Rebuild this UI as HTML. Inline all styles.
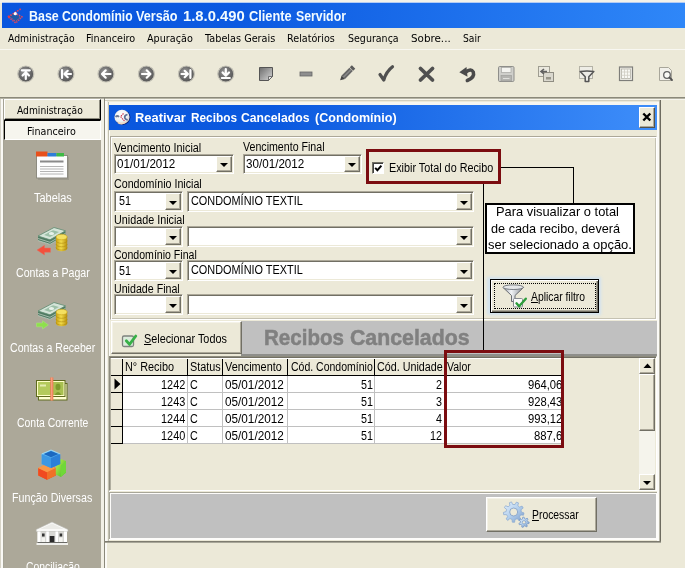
<!DOCTYPE html><html><head><meta charset="utf-8"><title>Base Condomínio</title><style>html,body{margin:0;padding:0}
body{width:685px;height:568px;overflow:hidden;background:#ECE9D8;position:relative;font-family:"Liberation Sans",sans-serif}
.a{position:absolute;box-sizing:border-box}
.t{position:absolute;white-space:nowrap;transform-origin:0 0}
.t u{text-decoration:underline;text-underline-offset:1px}
.btn{position:absolute;box-sizing:border-box;background:#ECE9D8;border:1px solid;border-color:#fff #716F64 #716F64 #fff;box-shadow:inset -1px -1px 0 #ACA899,inset 1px 1px 0 #F4F2E8}
.edit{position:absolute;box-sizing:border-box;background:#fff;border:1px solid;border-color:#ACA899 #fff #fff #ACA899;box-shadow:inset 1px 1px 0 #716F64,inset -1px -1px 0 #ECE9D8}
.dd{position:absolute;box-sizing:border-box;background:#ECE9D8;border:1px solid;border-color:#fff #716F64 #716F64 #fff;box-shadow:inset -1px -1px 0 #ACA899}
.dd:after{content:"";position:absolute;left:50%;top:50%;margin:-1px 0 0 -4px;border:4px solid transparent;border-top:4px solid #000;border-bottom:0}
.gl{position:absolute;background:#C0C0C0}
.bl{position:absolute;background:#000}
</style></head><body><!-- top frame -->
<div class="a" style="left:0;top:0;width:685px;height:3px;background:#F3F2EA"></div>
<div class="a" style="left:2px;top:2px;width:683px;height:26px;background:linear-gradient(to right,#0A56DE 0,#0C5AE1 35%,#2F87F8 100%)"></div><div class="a" style="left:2px;top:2px;width:683px;height:1px;background:#B4CCF4"></div>
<!-- app icon -->
<svg class="a" style="left:6px;top:5px" width="20" height="20" viewBox="6 5 20 20"><path d="M8.500 17l6-4.500 7.500 4.500-6.200 6z" fill="#1C5AA8"/><path d="M8 17L21.500 8.500" stroke="#E04058" stroke-width="1.700" stroke-dasharray="1.600 1.100"/><path d="M8.500 17.200l7.300 5.800 6.200-6-7.500-4.300" fill="none" stroke="#D8486C" stroke-width="1.500" stroke-dasharray="1.500 1"/><path d="M10.500 17.500l5.300 3.800 4-3.800" fill="none" stroke="#C05080" stroke-width="1" stroke-dasharray="1.200 1"/><circle cx="15.300" cy="13.700" r="1.600" fill="#fff"/><circle cx="9" cy="16.800" r="1.200" fill="#E03848"/></svg>
<!-- menu/toolbar separators -->
<div class="a" style="left:0;top:49px;width:685px;height:1px;background:#F8F7F1"></div>
<div class="a" style="left:0;top:97px;width:685px;height:1px;background:#8B897B"></div>
<div class="a" style="left:0;top:98px;width:685px;height:1px;background:#B5B3A4"></div>
<div class="a" style="left:0;top:99px;width:685px;height:1px;background:#F6F5EE"></div>
<!-- toolbar icons -->
<svg class="a" style="left:0;top:52px" width="685" height="44" viewBox="0 52 685 44">
<defs><radialGradient id="rg" cx="0.42" cy="0.38" r="0.68"><stop offset="0" stop-color="#9C9C9C"/><stop offset="0.55" stop-color="#6C6C6C"/><stop offset="1" stop-color="#505050"/></radialGradient>
<linearGradient id="ng" x1="0" y1="0" x2="1" y2="1"><stop offset="0" stop-color="#6c6c6c"/><stop offset="1" stop-color="#d8d8d8"/></linearGradient></defs>
<g stroke="#fff" stroke-width="2.200" fill="none" stroke-linecap="round" stroke-linejoin="round">
<circle cx="25.800" cy="74" r="8" fill="url(#rg)" stroke="#C4C2B6" stroke-width="1.200"/><path d="M21.800 70.300h8M25.800 79v-5.500M22.600 75.500l3.200-3.200 3.200 3.200"/>
<circle cx="66" cy="74" r="8" fill="url(#rg)" stroke="#C4C2B6" stroke-width="1.200"/><path d="M62 70v8M71 74h-5.500M67.700 70.800l-3.200 3.200 3.200 3.200"/>
<circle cx="106" cy="74" r="8" fill="url(#rg)" stroke="#C4C2B6" stroke-width="1.200"/><path d="M110.500 74h-7.500M105.700 70.300l-3.700 3.700 3.700 3.700"/>
<circle cx="146.400" cy="74" r="8" fill="url(#rg)" stroke="#C4C2B6" stroke-width="1.200"/><path d="M142 74h7.500M146.700 70.300l3.700 3.700-3.700 3.700"/>
<circle cx="186.400" cy="74" r="8" fill="url(#rg)" stroke="#C4C2B6" stroke-width="1.200"/><path d="M190.400 70v8M181.500 74h5.500M184.700 70.800l3.200 3.200-3.200 3.200"/>
<circle cx="225.800" cy="74" r="8" fill="url(#rg)" stroke="#C4C2B6" stroke-width="1.200"/><path d="M221.800 78h8M225.800 69v5.500M222.600 72.500l3.200 3.200 3.200-3.200"/>
</g>
<!-- note -->
<path d="M259.500 67.500h13v9l-4 4h-9z" fill="url(#ng)" stroke="#555" stroke-width="1"/><path d="M272.500 76.500h-4v4z" fill="#E8E8E8" stroke="#555" stroke-width="0.800"/>
<!-- minus -->
<rect x="300" y="72" width="12" height="4" fill="#8E8E8E" stroke="#666" stroke-width="0.800"/>
<!-- pencil -->
<g transform="translate(346.500 74) rotate(45)"><rect x="-2.400" y="-10" width="4.800" height="3" fill="#5a5a5a"/><rect x="-2.400" y="-6.500" width="4.800" height="11" fill="#666"/><rect x="-0.600" y="-6.500" width="1.300" height="11" fill="#8a8a8a"/><path d="M-2.400 4.500h4.800l-2.400 4.500z" fill="#444"/></g>
<!-- check -->
<path d="M380 74.500l3.800 5.500q2.500-8.500 8.700-13.200" fill="none" stroke="#505050" stroke-width="3.200" stroke-linecap="round" stroke-linejoin="round"/>
<!-- X -->
<path d="M420.500 68.500l12 11.500M432.500 68.500l-12 11.500" stroke="#505050" stroke-width="3.800" stroke-linecap="round"/>
<!-- undo -->
<path d="M465.500 72.300q5.500-4.300 7.800-.3q1.700 5.500-6 8.500" fill="none" stroke="#4a4a4a" stroke-width="3.500" stroke-linecap="round"/><path d="M459.300 72.300l7.200-5.300 1 9.800z" fill="#4a4a4a"/>
<!-- floppy (disabled) -->
<rect x="498.500" y="66.500" width="15.500" height="15" rx="1.200" fill="#CFCFCB" stroke="#8E8E8A"/><rect x="501.500" y="67.500" width="9.500" height="5" fill="#F4F4F0" stroke="#A6A6A2" stroke-width="0.700"/><rect x="501" y="75.500" width="10.500" height="5.500" fill="#B4B4B0" stroke="#9a9a96" stroke-width="0.600"/><path d="M503 78.500h6.500" stroke="#E0E0DC" stroke-width="1"/>
<!-- export -->
<rect x="538.500" y="66.500" width="11" height="10" fill="#EAE8DE" stroke="#9F9D91"/><rect x="543.500" y="72.500" width="10" height="9" fill="#DAD8CE" stroke="#8F8D82"/><path d="M547 71.500h-5M544 69l-3 2.500 3 2.500" fill="none" stroke="#606060" stroke-width="1.600"/><rect x="546" y="77" width="5" height="2.500" fill="#98968a"/>
<!-- filter -->
<rect x="579.500" y="66.500" width="13" height="12" fill="#EEEDE6" stroke="#B4B2A6"/><path d="M580.200 71.500q6.800-1.200 13.600 0l-5 5.300v4.700h-3.600v-4.700z" fill="#ECEBE6" stroke="#555" stroke-width="1.500" stroke-linejoin="round"/>
<!-- grid -->
<rect x="619.500" y="67" width="13" height="13.500" fill="#F0EFE8" stroke="#7E7E7A" stroke-width="1.200"/><rect x="621.500" y="69" width="9" height="9.500" fill="#F8F8F4" stroke="#B4B2A8" stroke-width="0.800"/><path d="M624.500 69v9.500M627.500 69v9.500M621.500 72h9M621.500 75.300h9" stroke="#CFCDC3" stroke-width="0.800"/>
<!-- search -->
<path d="M659.500 67.500h9l3 3v10h-12z" fill="#F1F0EA" stroke="#A8A69A"/><circle cx="667" cy="75" r="3.300" fill="#F9F9F5" stroke="#606060" stroke-width="1.300"/><path d="M669.500 77.500l2.500 2.500" stroke="#505050" stroke-width="1.800" stroke-linecap="round"/>
</svg>

<!-- sidebar -->
<div class="a" style="left:0;top:99px;width:1px;height:469px;background:#D6D3C6"></div><div class="a" style="left:1px;top:99px;width:2px;height:469px;background:#FAF9F5"></div><div class="a" style="left:3px;top:99px;width:1px;height:469px;background:#A5A395"></div>
<div class="a" style="left:4px;top:140px;width:97px;height:428px;background:#ACA899"></div>
<div class="a" style="left:4px;top:99px;width:97px;height:21px;background:#ECE9D8;border:1px solid;border-color:#fff #000 #000 #fff;box-shadow:inset -1px -1px 0 #8d8b7e"></div>
<div class="a" style="left:4px;top:120px;width:97px;height:20px;background:#F6F5EE;border:1px solid;border-color:#000 #fff #fff #000"></div>
<!-- splitter lines -->
<div class="a" style="left:101px;top:99px;width:3px;height:469px;background:#F2F0E6"></div>
<div class="a" style="left:104px;top:98px;width:1px;height:470px;background:#8B897B"></div>
<div class="a" style="left:105px;top:99px;width:2px;height:469px;background:#FBFAF6"></div>
<!-- sidebar icons -->
<svg class="a" style="left:3px;top:140px" width="98" height="428" viewBox="3 140 98 428">
<defs>
<linearGradient id="cy" x1="0" y1="0" x2="1" y2="0"><stop offset="0" stop-color="#C9A012"/><stop offset="0.45" stop-color="#F2DC4A"/><stop offset="1" stop-color="#B8900E"/></linearGradient>
<linearGradient id="cb" x1="0" y1="0" x2="1" y2="1"><stop offset="0" stop-color="#7CD4FA"/><stop offset="1" stop-color="#1E78D8"/></linearGradient>
<linearGradient id="co" x1="0" y1="0" x2="1" y2="1"><stop offset="0" stop-color="#F8A040"/><stop offset="1" stop-color="#E83818"/></linearGradient>
<linearGradient id="cg" x1="0" y1="0" x2="1" y2="1"><stop offset="0" stop-color="#C8F050"/><stop offset="1" stop-color="#38B828"/></linearGradient>
</defs>
<!-- tabelas -->
<rect x="38" y="157" width="31" height="23" fill="#8f8d82" opacity="0.55"/>
<rect x="36.500" y="155.500" width="31" height="22.500" fill="#FDFDFD" stroke="#8d8b80"/>
<rect x="36" y="151.500" width="11.500" height="5" fill="#E8501C"/><rect x="47.500" y="153" width="9" height="3.500" fill="#2F7DD8"/><rect x="56.500" y="153" width="7.500" height="3.500" fill="#3DBB45"/>
<rect x="40" y="160.500" width="23.500" height="2" fill="#8a8a8a"/><path d="M40 166.500h23.500M40 169h23.500M40 171.500h23.500M40 174h23.500" stroke="#B4B4B4" stroke-width="1"/>
<!-- contas a pagar -->
<g><path d="M38 240.500v-4l16-8.500 11.500 3.500v4l-15.500 9z" fill="#4F7A62"/><path d="M38 236l16-8.500 11.500 3.300-15.500 9z" fill="#D4E4D8" stroke="#5E8A70" stroke-width="0.800"/><path d="M44 235l9-4.800 6 1.800-9 5z" fill="#9CC0A8"/><ellipse cx="51.500" cy="233.500" rx="2.600" ry="1.500" fill="#E8F2EA"/><path d="M38 238.500l12 3.800 15.500-9M38 240.500l12 3.800 15.500-9" stroke="#C8D8CC" stroke-width="0.700" fill="none"/>
<path d="M56 237v11.500a5.600 2.800 0 0 0 11.200 0v-11.500z" fill="url(#cy)"/><ellipse cx="61.600" cy="237" rx="5.600" ry="2.800" fill="#F4E060" stroke="#C8A018" stroke-width="0.600"/><path d="M56 240.500a5.600 2.800 0 0 0 11.200 0M56 244a5.600 2.800 0 0 0 11.200 0M56 247.300a5.600 2.800 0 0 0 11.200 0" stroke="#B08A10" stroke-width="0.600" fill="none"/></g>
<path d="M50.500 248h-6v-2.800l-7.500 4.800 7.500 5v-2.800h6z" fill="#F4503C" stroke="#E07060" stroke-width="0.500"/>
<!-- contas a receber -->
<g transform="translate(0 75)"><path d="M38 240.500v-4l16-8.500 11.500 3.500v4l-15.500 9z" fill="#4F7A62"/><path d="M38 236l16-8.500 11.500 3.300-15.500 9z" fill="#D4E4D8" stroke="#5E8A70" stroke-width="0.800"/><path d="M44 235l9-4.800 6 1.800-9 5z" fill="#9CC0A8"/><ellipse cx="51.500" cy="233.500" rx="2.600" ry="1.500" fill="#E8F2EA"/><path d="M38 238.500l12 3.800 15.500-9M38 240.500l12 3.800 15.500-9" stroke="#C8D8CC" stroke-width="0.700" fill="none"/>
<path d="M56 237v11.500a5.600 2.800 0 0 0 11.200 0v-11.500z" fill="url(#cy)"/><ellipse cx="61.600" cy="237" rx="5.600" ry="2.800" fill="#F4E060" stroke="#C8A018" stroke-width="0.600"/><path d="M56 240.500a5.600 2.800 0 0 0 11.200 0M56 244a5.600 2.800 0 0 0 11.200 0M56 247.300a5.600 2.800 0 0 0 11.200 0" stroke="#B08A10" stroke-width="0.600" fill="none"/></g>
<path d="M36.500 323h6v-2.300l5.800 4.200-5.800 4.200v-2.300h-6z" fill="#8EE04C" stroke="#A8E878" stroke-width="0.500"/>
<!-- conta corrente -->
<rect x="38.500" y="383.500" width="28.500" height="16.500" fill="#FFFFD0" stroke="#5E6A1E"/>
<rect x="36" y="380" width="29.500" height="17" fill="#5E6A1E"/><rect x="37" y="381" width="27.500" height="15" fill="#FFFFC8"/><rect x="38" y="382" width="25.500" height="13" fill="#A8C050"/><rect x="38" y="382" width="12" height="13" fill="#B4CA5C"/>
<ellipse cx="58" cy="387" rx="2.500" ry="3.200" fill="#7E9A2C"/><path d="M54.500 395q3.500-6 7 0z" fill="#7E9A2C"/><rect x="40" y="384.500" width="6" height="2" fill="#E4ECB0"/>
<rect x="50.300" y="377.500" width="3" height="23" fill="#F07850"/><rect x="51.300" y="377.500" width="1" height="23" fill="#F8B090"/>
<!-- funcao diversas -->
<path d="M38.200 468l8.800-4.200 8.800 4.200v7.500l-8.800 4.200-8.800-4.200z" fill="url(#co)"/><path d="M47 472.200l8.800-4.200v7.500l-8.800 4.200z" fill="#F07028"/><path d="M38.200 468l8.800 4.200v7.500l-8.800-4.200z" fill="#F04A20"/><path d="M38.200 468l8.800-4.200 8.800 4.200-8.800 4.200z" fill="#F89848"/>
<path d="M55.800 463.500l5-4.500 5.200 2v11.500l-5.200 4.500-5-2.500z" fill="url(#cg)"/><path d="M60.800 465.500l5.200-4.500v11.500l-5.200 4.500z" fill="#70D838"/>
<g transform="translate(0 1.500)"><path d="M41.700 452.500l9.300-4 9.200 4v10l-9.200 4-9.300-4z" fill="url(#cb)"/><path d="M41.700 452.500l9.300 4v10l-9.300-4z" fill="#3C98E4"/><path d="M51 456.500l9.200-4v10l-9.200 4z" fill="#2C80D8"/><path d="M43.500 452.600l7.500-3.200 7.400 3.200-7.400 3.200z" fill="#1C68C0"/><path d="M41.700 452.500l9.300-4 9.200 4" fill="none" stroke="#A8E0FC" stroke-width="0.800"/></g>
<!-- conciliacao -->
<path d="M36.200 529.500l15.800-7.500 16 7.500v2h-31.800z" fill="#FAFAF8" stroke="#B8B8B4" stroke-width="0.600"/><path d="M40 529l12-5.500 12 5.500z" fill="#ECECE8"/>
<rect x="37.500" y="531.500" width="29.500" height="11.500" fill="#D8D8D4"/><rect x="36.500" y="543" width="31.500" height="2" fill="#F0F0EC"/><rect x="37.500" y="542" width="29.500" height="1" fill="#6a6a66"/>
<rect x="37.500" y="531.500" width="3" height="10.500" fill="#fff"/><rect x="46.300" y="531.500" width="2.500" height="10.500" fill="#fff"/><rect x="55.500" y="531.500" width="2.500" height="10.500" fill="#fff"/><rect x="64" y="531.500" width="3" height="10.500" fill="#fff"/>
<rect x="49.700" y="536" width="4.700" height="6" fill="#2a2a2a"/><rect x="42" y="533.500" width="2.600" height="3" fill="#333"/><rect x="59.600" y="533.500" width="2.600" height="3" fill="#333"/><rect x="41.500" y="537.500" width="3.500" height="4.500" fill="#F4F4F0"/><rect x="59" y="537.500" width="3.500" height="4.500" fill="#F4F4F0"/>
</svg>

<!-- inner window -->
<div class="a" style="left:105px;top:100px;width:555px;height:1px;background:#D2CFBF"></div>
<div class="a" style="left:107px;top:102px;width:552px;height:3px;background:#F7F6F0"></div>
<div class="a" style="left:107px;top:102px;width:1px;height:439px;background:#F1EFE5"></div><div class="a" style="left:108px;top:102px;width:1px;height:439px;background:#C2C0B0"></div><div class="a" style="left:109px;top:131px;width:1px;height:361px;background:#FBFAF6"></div>
<div class="a" style="left:109px;top:105px;width:548px;height:25px;background:linear-gradient(to right,#0A57DE 0,#0B59DF 30%,#3E8EFA 100%)"></div>
<!-- globe icon -->
<svg class="a" style="left:112px;top:107px" width="20" height="20" viewBox="112 107 20 20"><defs><radialGradient id="gg" cx="0.420" cy="0.350" r="0.750"><stop offset="0" stop-color="#fff"/><stop offset="0.600" stop-color="#EEF0F2"/><stop offset="1" stop-color="#C8C0B8"/></radialGradient></defs><ellipse cx="122.500" cy="117.600" rx="7.800" ry="7.400" fill="#0A1E70"/><ellipse cx="122" cy="117" rx="7.600" ry="7.200" fill="url(#gg)"/><path d="M115.500 116.800q1.800-1.600 3.600 0" fill="none" stroke="#6E7A94" stroke-width="1.800"/><path d="M127.500 114.500q-3 .5-2.800 2.800t3 2.500" fill="none" stroke="#5E6E94" stroke-width="1.700"/><path d="M123.500 113.500l-3 3 2 2.500 2.500 2.500" fill="none" stroke="#C83048" stroke-width="1.100" stroke-dasharray="1.400 0.800"/><path d="M118 122.500q4 2.500 8-.5" fill="none" stroke="#F0D8C0" stroke-width="1.500"/></svg>
<!-- close button -->
<div class="a" style="left:639px;top:107px;width:16px;height:21px;background:#ECE9D8;border:1px solid;border-color:#fff #55534A #55534A #fff;box-shadow:inset -1px -1px 0 #ACA899"></div>
<svg class="a" style="left:641px;top:111px" width="12" height="12" viewBox="0 0 12 12"><path d="M2.300 2.500l7 7M9.300 2.500l-7 7" stroke="#000" stroke-width="2.400"/></svg>
<!-- inner right edge -->
<div class="a" style="left:657px;top:102px;width:2px;height:439px;background:#FBFAF6"></div>
<div class="a" style="left:659px;top:100px;width:1px;height:442px;background:#B8B6A8"></div>
<div class="a" style="left:660px;top:100px;width:1px;height:443px;background:#6E6C60"></div>

<!-- form panel -->
<div class="a" style="left:110px;top:136px;width:547px;height:184px;border:1px solid;border-color:#ACA899 #fff #fff #ACA899;box-shadow:inset 1px 1px 0 #fff,inset -1px -1px 0 #C5C2B2"></div>
<!-- date 1 -->
<div class="edit" style="left:114px;top:154px;width:120px;height:20px"></div><div class="dd" style="left:216px;top:156px;width:16px;height:16px"></div>
<!-- date 2 -->
<div class="edit" style="left:243px;top:154px;width:119px;height:20px"></div><div class="dd" style="left:344px;top:156px;width:16px;height:16px"></div>
<!-- checkbox -->
<div class="a" style="left:372px;top:162px;width:12px;height:12px;background:#fff;border:1px solid;border-color:#716F64 #fff #fff #716F64;box-shadow:inset 1px 1px 0 #404040"></div>
<svg class="a" style="left:374px;top:164px" width="9" height="9" viewBox="0 0 9 9"><path d="M1.200 3.800l2.200 2.400 4-4.600" fill="none" stroke="#000" stroke-width="1.900"/></svg>
<!-- combos -->
<div class="edit" style="left:114px;top:191px;width:69px;height:21px"></div><div class="dd" style="left:165px;top:193px;width:16px;height:17px"></div>
<div class="edit" style="left:187px;top:191px;width:287px;height:21px"></div><div class="dd" style="left:456px;top:193px;width:16px;height:17px"></div>
<div class="edit" style="left:114px;top:226px;width:69px;height:21px"></div><div class="dd" style="left:165px;top:228px;width:16px;height:17px"></div>
<div class="edit" style="left:187px;top:226px;width:287px;height:21px"></div><div class="dd" style="left:456px;top:228px;width:16px;height:17px"></div>
<div class="edit" style="left:114px;top:260px;width:69px;height:21px"></div><div class="dd" style="left:165px;top:262px;width:16px;height:17px"></div>
<div class="edit" style="left:187px;top:260px;width:287px;height:21px"></div><div class="dd" style="left:456px;top:262px;width:16px;height:17px"></div>
<div class="edit" style="left:114px;top:294px;width:69px;height:21px"></div><div class="dd" style="left:165px;top:296px;width:16px;height:17px"></div>
<div class="edit" style="left:187px;top:294px;width:287px;height:21px"></div><div class="dd" style="left:456px;top:296px;width:16px;height:17px"></div>

<!-- Aplicar filtro -->
<div class="a" style="left:487px;top:277px;width:114px;height:38px;background:#D2E2F0;filter:blur(1.500px)"></div>
<div class="a" style="left:489.500px;top:279px;width:109.500px;height:33.800px;background:#ECE9D8;border:1px solid #000;box-shadow:inset 1px 1px 0 #fff,inset -1px -1px 0 #716F64,inset -2px -2px 0 #ACA899"></div>
<div class="a" style="left:493.500px;top:282.500px;width:102px;height:26.500px;border:1px dotted #000"></div>
<svg class="a" style="left:500px;top:282px" width="30" height="30" viewBox="500 282 30 30"><defs><linearGradient id="fg" x1="0" y1="0" x2="1" y2="0"><stop offset="0" stop-color="#9aa0a8"/><stop offset="0.4" stop-color="#F2F4F6"/><stop offset="1" stop-color="#8a9098"/></linearGradient></defs><path d="M503 287.500l8.500 8v6h3.500v-6l8.500-8z" fill="url(#fg)" stroke="#5c6068" stroke-width="0.900" stroke-linejoin="round"/><ellipse cx="513.200" cy="287.200" rx="10.300" ry="2.300" fill="#E4E6E8" stroke="#6c7078" stroke-width="0.900"/><rect x="513.500" y="298.500" width="9" height="8.500" rx="1" fill="#FAFAFA" stroke="#7c8088" stroke-width="0.900"/><path d="M516.500 303.300l2.600 3 6.700-7.600" fill="none" stroke="#2E9E3C" stroke-width="2.400" stroke-linecap="round" stroke-linejoin="round"/></svg>

<!-- select all button + banner -->
<div class="a" style="left:241px;top:321px;width:416px;height:35px;background:#C0C0C0"></div>
<div class="a" style="left:241px;top:354px;width:416px;height:2px;background:#8E8E8A"></div>
<div class="btn" style="left:111px;top:321px;width:131px;height:33px"></div>
<svg class="a" style="left:120px;top:331px" width="20" height="20" viewBox="120 331 20 20"><rect x="122.500" y="336" width="11" height="10.500" rx="1.500" fill="#DCEBDC" stroke="#7E827E" stroke-width="1.300"/><path d="M126.300 340.800l3.200 3.600 6.300-8.400" fill="none" stroke="#38B048" stroke-width="2.800" stroke-linecap="round" stroke-linejoin="round"/></svg>

<!-- grid -->
<div class="a" style="left:109px;top:356px;width:548px;height:135px;border:1px solid;border-color:#8E8C7E #fff #fff #8E8C7E;box-shadow:inset 0 1px 0 #716F64,inset 1px 0 0 #B0AE9F"></div>
<div class="a" style="left:123px;top:376px;width:441px;height:68px;background:#fff"></div>
<!-- grid lines -->
<div class="gl" style="left:123px;top:392px;width:441px;height:1px"></div><div class="gl" style="left:123px;top:409px;width:441px;height:1px"></div><div class="gl" style="left:123px;top:426px;width:441px;height:1px"></div><div class="gl" style="left:123px;top:443px;width:441px;height:1px"></div>
<div class="gl" style="left:187px;top:376px;width:1px;height:68px"></div><div class="gl" style="left:222px;top:376px;width:1px;height:68px"></div><div class="gl" style="left:287px;top:376px;width:1px;height:68px"></div><div class="gl" style="left:374px;top:376px;width:1px;height:68px"></div><div class="gl" style="left:444px;top:376px;width:1px;height:68px"></div><div class="gl" style="left:563px;top:376px;width:1px;height:68px"></div>
<!-- header black lines -->
<div class="bl" style="left:111px;top:375px;width:453px;height:1px"></div>
<div class="bl" style="left:122px;top:358px;width:1px;height:86px"></div><div class="bl" style="left:187px;top:358px;width:1px;height:18px"></div><div class="bl" style="left:222px;top:358px;width:1px;height:18px"></div><div class="bl" style="left:287px;top:358px;width:1px;height:18px"></div><div class="bl" style="left:374px;top:358px;width:1px;height:18px"></div><div class="bl" style="left:444px;top:358px;width:1px;height:18px"></div><div class="bl" style="left:563px;top:358px;width:1px;height:18px"></div>
<div class="bl" style="left:111px;top:392px;width:12px;height:1px"></div><div class="bl" style="left:111px;top:409px;width:12px;height:1px"></div><div class="bl" style="left:111px;top:426px;width:12px;height:1px"></div><div class="bl" style="left:111px;top:443px;width:12px;height:1px"></div>
<!-- header highlight -->
<div class="a" style="left:111px;top:358px;width:452px;height:1px;background:#fff"></div>
<!-- row indicator -->
<svg class="a" style="left:113px;top:377px" width="9" height="14" viewBox="0 0 9 14"><path d="M1.500 1.500v11l6-5.500z" fill="#000"/></svg>
<!-- scrollbar -->
<div class="a" style="left:639px;top:358px;width:16px;height:132px;background:#F5F4EC"></div>
<div class="dd" style="left:639px;top:358px;width:16px;height:16px"></div>
<div class="a" style="left:639px;top:358px;width:16px;height:16px;background:#ECE9D8;border:1px solid;border-color:#fff #716F64 #716F64 #fff;box-shadow:inset -1px -1px 0 #ACA899"></div>
<svg class="a" style="left:643px;top:363px" width="9" height="6" viewBox="0 0 9 6"><path d="M0.500 5h8l-4-4.500z" fill="#000"/></svg>
<div class="a" style="left:639px;top:374px;width:16px;height:57px;background:#ECE9D8;border:1px solid;border-color:#fff #716F64 #716F64 #fff;box-shadow:inset -1px -1px 0 #ACA899"></div>
<div class="dd" style="left:639px;top:474px;width:16px;height:16px"></div>

<!-- bottom panel -->
<div class="a" style="left:109px;top:492px;width:549px;height:48px;background:#FDFCFA"></div>
<div class="a" style="left:109px;top:492px;width:548px;height:1px;background:#A8A698"></div>
<div class="a" style="left:109px;top:492px;width:1px;height:47px;background:#A8A698"></div>
<div class="a" style="left:111px;top:494px;width:545px;height:44px;background:#C0C0C0"></div>
<div class="a" style="left:105px;top:541px;width:556px;height:1px;background:#7E7C70"></div>
<div class="a" style="left:105px;top:542px;width:556px;height:1px;background:#A8A698"></div>
<div class="btn" style="left:486px;top:497px;width:111px;height:35px"></div>
<svg class="a" style="left:500px;top:498px" width="32" height="32" viewBox="500 498 32 32"><defs><linearGradient id="gr" x1="0" y1="0" x2="1" y2="1"><stop offset="0" stop-color="#E8F2FC"/><stop offset="0.5" stop-color="#B4D0EE"/><stop offset="1" stop-color="#7C9CC8"/></linearGradient></defs><path d="M521.3 512.0L524.0 512.9L523.5 515.2L520.7 514.9L519.5 516.9L521.0 519.3L519.2 520.7L517.2 518.8L515.0 519.5L514.6 522.3L512.3 522.2L512.0 519.4L509.9 518.6L507.8 520.4L506.1 518.9L507.7 516.6L506.5 514.6L503.7 514.7L503.4 512.4L506.1 511.6L506.6 509.4L504.4 507.6L505.6 505.7L508.1 506.8L509.9 505.4L509.4 502.7L511.5 501.9L512.7 504.5L515.1 504.5L516.4 502.1L518.5 502.9L517.8 505.6L519.5 507.1L522.1 506.1L523.2 508.1L521.0 509.7Z" fill="url(#gr)" stroke="#88A8D0" stroke-width="0.7" stroke-linejoin="round"/><circle cx="513.7" cy="512" r="4" fill="#ECE9D8" stroke="#7C9CC8" stroke-width="0.8"/><path d="M527.7 521.7L529.2 522.1L529.0 523.6L527.5 523.6L526.7 524.8L527.4 526.2L526.2 527.0L525.2 525.8L523.7 526.0L523.1 527.4L521.7 526.9L522.0 525.4L520.9 524.4L519.4 524.8L518.9 523.4L520.3 522.7L520.5 521.2L519.2 520.3L520.0 519.0L521.4 519.6L522.6 518.9L522.6 517.3L524.1 517.1L524.5 518.6L525.8 519.1L527.1 518.1L528.1 519.1L527.2 520.4Z" fill="url(#gr)" stroke="#6E90C0" stroke-width="0.7" stroke-linejoin="round"/><circle cx="524" cy="522.3" r="1.7" fill="#ECE9D8" stroke="#6E90C0" stroke-width="0.6"/></svg>

<!-- annotations -->
<div class="a" style="left:366px;top:149px;width:135px;height:35px;border:3px solid #7B0C10"></div>
<div class="bl" style="left:501px;top:167px;width:73px;height:1px"></div>
<div class="bl" style="left:573px;top:167px;width:1px;height:37px"></div>
<div class="a" style="left:485px;top:203px;width:150px;height:51px;background:#fff;border:2px solid #000"></div>
<div class="bl" style="left:483px;top:184px;width:1px;height:166px"></div>
<div id="txt"><span class="t" id="t0" style="left:28.76px;top:8.85px;font:700 14px/14px 'Liberation Sans', sans-serif;color:#F2FBFF;transform:scaleX(0.8895);">Base</span><span class="t" id="t1" style="left:61.58px;top:8.85px;font:700 14px/14px 'Liberation Sans', sans-serif;color:#F2FBFF;transform:scaleX(0.8639);">Condomínio</span><span class="t" id="t2" style="left:136.46px;top:8.85px;font:700 14px/14px 'Liberation Sans', sans-serif;color:#F2FBFF;transform:scaleX(0.9031);">Versão</span><span class="t" id="t3" style="left:182.78px;top:8.85px;font:700 14px/14px 'Liberation Sans', sans-serif;color:#F2FBFF;transform:scaleX(1.0573);">1.8.0.490</span><span class="t" id="t4" style="left:248.75px;top:8.85px;font:700 14px/14px 'Liberation Sans', sans-serif;color:#F2FBFF;transform:scaleX(0.9145);">Cliente</span><span class="t" id="t5" style="left:295.97px;top:8.85px;font:700 14px/14px 'Liberation Sans', sans-serif;color:#F2FBFF;transform:scaleX(0.8794);">Servidor</span><span class="t" id="t6" style="left:7.87px;top:32.59px;font:400 11px/11px 'DejaVu Sans', sans-serif;color:#000;transform:scaleX(0.8442);">Administração</span><span class="t" id="t7" style="left:86.26px;top:32.59px;font:400 11px/11px 'DejaVu Sans', sans-serif;color:#000;transform:scaleX(0.8775);">Financeiro</span><span class="t" id="t8" style="left:147.46px;top:32.59px;font:400 11px/11px 'DejaVu Sans', sans-serif;color:#000;transform:scaleX(0.8777);">Apuração</span><span class="t" id="t9" style="left:205.26px;top:32.59px;font:400 11px/11px 'DejaVu Sans', sans-serif;color:#000;transform:scaleX(0.8811);">Tabelas Gerais</span><span class="t" id="t10" style="left:287.26px;top:32.59px;font:400 11px/11px 'DejaVu Sans', sans-serif;color:#000;transform:scaleX(0.8736);">Relatórios</span><span class="t" id="t11" style="left:347.87px;top:32.59px;font:400 11px/11px 'DejaVu Sans', sans-serif;color:#000;transform:scaleX(0.8626);">Segurança</span><span class="t" id="t12" style="left:411.14px;top:32.59px;font:400 11px/11px 'DejaVu Sans', sans-serif;color:#000;transform:scaleX(0.9406);">Sobre...</span><span class="t" id="t13" style="left:462.98px;top:32.59px;font:400 11px/11px 'DejaVu Sans', sans-serif;color:#000;transform:scaleX(0.8373);">Sair</span><span class="t" id="t14" style="left:16.98px;top:105.19px;font:400 11px/11px 'DejaVu Sans', sans-serif;color:#000;transform:scaleX(0.8339);">Administração</span><span class="t" id="t15" style="left:27.46px;top:125.79px;font:400 11px/11px 'DejaVu Sans', sans-serif;color:#000;transform:scaleX(0.8703);">Financeiro</span><span class="t" id="t16" style="left:33.62px;top:192.32px;font:400 12.5px/12.5px 'Liberation Sans', sans-serif;color:#fff;transform:scaleX(0.8764);">Tabelas</span><span class="t" id="t17" style="left:16.13px;top:267.32px;font:400 12.5px/12.5px 'Liberation Sans', sans-serif;color:#fff;transform:scaleX(0.8490);">Contas a Pagar</span><span class="t" id="t18" style="left:9.63px;top:341.82px;font:400 12.5px/12.5px 'Liberation Sans', sans-serif;color:#fff;transform:scaleX(0.8459);">Contas a Receber</span><span class="t" id="t19" style="left:17.03px;top:417.02px;font:400 12.5px/12.5px 'Liberation Sans', sans-serif;color:#fff;transform:scaleX(0.8346);">Conta Corrente</span><span class="t" id="t20" style="left:11.83px;top:492.32px;font:400 12.5px/12.5px 'Liberation Sans', sans-serif;color:#fff;transform:scaleX(0.8556);">Função Diversas</span><span class="t" id="t21" style="left:25.64px;top:561.32px;font:400 12.5px/12.5px 'Liberation Sans', sans-serif;color:#fff;transform:scaleX(0.8314);">Conciliação</span><span class="t" id="t22" style="left:135.35px;top:111.47px;font:700 13.5px/13.5px 'Liberation Sans', sans-serif;color:#fff;transform:scaleX(0.9551);">Reativar</span><span class="t" id="t23" style="left:190.79px;top:111.47px;font:700 13.5px/13.5px 'Liberation Sans', sans-serif;color:#fff;transform:scaleX(0.8762);">Recibos</span><span class="t" id="t24" style="left:241.37px;top:111.47px;font:700 13.5px/13.5px 'Liberation Sans', sans-serif;color:#fff;transform:scaleX(0.9033);">Cancelados</span><span class="t" id="t25" style="left:315.06px;top:111.47px;font:700 13.5px/13.5px 'Liberation Sans', sans-serif;color:#fff;transform:scaleX(0.9298);">(Condomínio)</span><span class="t" id="t26" style="left:113.62px;top:142.32px;font:400 12.5px/12.5px 'Liberation Sans', sans-serif;color:#000;transform:scaleX(0.8659);">Vencimento Inicial</span><span class="t" id="t27" style="left:243.23px;top:141.32px;font:400 12.5px/12.5px 'Liberation Sans', sans-serif;color:#000;transform:scaleX(0.8504);">Vencimento Final</span><span class="t" id="t28" style="left:117.09px;top:157.82px;font:400 12.5px/12.5px 'Liberation Sans', sans-serif;color:#000;transform:scaleX(0.9321);">01/01/2012</span><span class="t" id="t29" style="left:246.09px;top:157.82px;font:400 12.5px/12.5px 'Liberation Sans', sans-serif;color:#000;transform:scaleX(0.9321);">30/01/2012</span><span class="t" id="t30" style="left:389.12px;top:162.12px;font:400 12.5px/12.5px 'Liberation Sans', sans-serif;color:#000;transform:scaleX(0.8640);">Exibir Total do Recibo</span><span class="t" id="t31" style="left:113.63px;top:178.32px;font:400 12.5px/12.5px 'Liberation Sans', sans-serif;color:#000;transform:scaleX(0.8532);">Condomínio Inicial</span><span class="t" id="t32" style="left:118.62px;top:195.32px;font:400 12.5px/12.5px 'Liberation Sans', sans-serif;color:#000;transform:scaleX(0.8600);">51</span><span class="t" id="t33" style="left:190.62px;top:194.92px;font:400 12.5px/12.5px 'Liberation Sans', sans-serif;color:#000;transform:scaleX(0.8713);">CONDOMÍNIO TEXTIL</span><span class="t" id="t34" style="left:113.62px;top:214.32px;font:400 12.5px/12.5px 'Liberation Sans', sans-serif;color:#000;transform:scaleX(0.8629);">Unidade Inicial</span><span class="t" id="t35" style="left:113.63px;top:248.82px;font:400 12.5px/12.5px 'Liberation Sans', sans-serif;color:#000;transform:scaleX(0.8445);">Condomínio Final</span><span class="t" id="t36" style="left:118.62px;top:264.82px;font:400 12.5px/12.5px 'Liberation Sans', sans-serif;color:#000;transform:scaleX(0.8600);">51</span><span class="t" id="t37" style="left:190.62px;top:264.12px;font:400 12.5px/12.5px 'Liberation Sans', sans-serif;color:#000;transform:scaleX(0.8713);">CONDOMÍNIO TEXTIL</span><span class="t" id="t38" style="left:113.63px;top:283.32px;font:400 12.5px/12.5px 'Liberation Sans', sans-serif;color:#000;transform:scaleX(0.8523);">Unidade Final</span><span class="t" id="t39" style="left:495.55px;top:206.46px;font:400 12.8px/12.8px 'Liberation Sans', sans-serif;color:#000;transform:scaleX(1.0045);">Para visualizar o total</span><span class="t" id="t40" style="left:491.36px;top:222.66px;font:400 12.8px/12.8px 'Liberation Sans', sans-serif;color:#000;transform:scaleX(0.9916);">de cada recibo, deverá</span><span class="t" id="t41" style="left:487.55px;top:238.86px;font:400 12.8px/12.8px 'Liberation Sans', sans-serif;color:#000;transform:scaleX(1.0113);">ser selecionado a opção.</span><span class="t" id="t42" style="left:530.64px;top:291.12px;font:400 12.5px/12.5px 'Liberation Sans', sans-serif;color:#000;transform:scaleX(0.8272);"><u>A</u>plicar filtro</span><span class="t" id="t43" style="left:144.12px;top:332.82px;font:400 12.5px/12.5px 'Liberation Sans', sans-serif;color:#000;transform:scaleX(0.8659);"><u>S</u>elecionar Todos</span><span class="t" id="t44" style="left:263.98px;top:328.30px;font:700 21.5px/21.5px 'Liberation Sans', sans-serif;color:#808080;transform:scaleX(0.9557);-webkit-text-stroke:0.5px #808080;">Recibos</span><span class="t" id="t45" style="left:350.05px;top:328.30px;font:700 21.5px/21.5px 'Liberation Sans', sans-serif;color:#808080;transform:scaleX(0.9901);-webkit-text-stroke:0.5px #808080;">Cancelados</span><span class="t" id="t46" style="left:125.32px;top:361.32px;font:400 12.5px/12.5px 'Liberation Sans', sans-serif;color:#000;transform:scaleX(0.8695);">N° Recibo</span><span class="t" id="t47" style="left:190.12px;top:361.32px;font:400 12.5px/12.5px 'Liberation Sans', sans-serif;color:#000;transform:scaleX(0.8680);">Status</span><span class="t" id="t48" style="left:224.62px;top:361.32px;font:400 12.5px/12.5px 'Liberation Sans', sans-serif;color:#000;transform:scaleX(0.8688);">Vencimento</span><span class="t" id="t49" style="left:290.63px;top:361.32px;font:400 12.5px/12.5px 'Liberation Sans', sans-serif;color:#000;transform:scaleX(0.8402);">Cód. Condomínio</span><span class="t" id="t50" style="left:376.62px;top:361.32px;font:400 12.5px/12.5px 'Liberation Sans', sans-serif;color:#000;transform:scaleX(0.8600);">Cód. Unidade</span><span class="t" id="t51" style="left:447.13px;top:361.32px;font:400 12.5px/12.5px 'Liberation Sans', sans-serif;color:#000;transform:scaleX(0.8397);">Valor</span><span class="t" id="t52" style="left:161.12px;top:379.02px;font:400 12.5px/12.5px 'Liberation Sans', sans-serif;color:#000;transform:scaleX(0.8724);">1242</span><span class="t" id="t53" style="left:190.42px;top:379.02px;font:400 12.5px/12.5px 'Liberation Sans', sans-serif;color:#000;transform:scaleX(0.8600);">C</span><span class="t" id="t54" style="left:225.09px;top:379.02px;font:400 12.5px/12.5px 'Liberation Sans', sans-serif;color:#000;transform:scaleX(0.9402);">05/01/2012</span><span class="t" id="t55" style="left:360.92px;top:379.02px;font:400 12.5px/12.5px 'Liberation Sans', sans-serif;color:#000;transform:scaleX(0.8600);">51</span><span class="t" id="t56" style="left:436.40px;top:379.02px;font:400 12.5px/12.5px 'Liberation Sans', sans-serif;color:#000;transform:scaleX(0.8600);">2</span><span class="t" id="t57" style="left:528.11px;top:379.02px;font:400 12.5px/12.5px 'Liberation Sans', sans-serif;color:#000;transform:scaleX(0.8967);">964,06</span><span class="t" id="t58" style="left:161.12px;top:396.02px;font:400 12.5px/12.5px 'Liberation Sans', sans-serif;color:#000;transform:scaleX(0.8724);">1243</span><span class="t" id="t59" style="left:190.42px;top:396.02px;font:400 12.5px/12.5px 'Liberation Sans', sans-serif;color:#000;transform:scaleX(0.8600);">C</span><span class="t" id="t60" style="left:225.09px;top:396.02px;font:400 12.5px/12.5px 'Liberation Sans', sans-serif;color:#000;transform:scaleX(0.9402);">05/01/2012</span><span class="t" id="t61" style="left:360.92px;top:396.02px;font:400 12.5px/12.5px 'Liberation Sans', sans-serif;color:#000;transform:scaleX(0.8600);">51</span><span class="t" id="t62" style="left:436.40px;top:396.02px;font:400 12.5px/12.5px 'Liberation Sans', sans-serif;color:#000;transform:scaleX(0.8600);">3</span><span class="t" id="t63" style="left:528.11px;top:396.02px;font:400 12.5px/12.5px 'Liberation Sans', sans-serif;color:#000;transform:scaleX(0.8967);">928,43</span><span class="t" id="t64" style="left:161.12px;top:413.02px;font:400 12.5px/12.5px 'Liberation Sans', sans-serif;color:#000;transform:scaleX(0.8724);">1244</span><span class="t" id="t65" style="left:190.42px;top:413.02px;font:400 12.5px/12.5px 'Liberation Sans', sans-serif;color:#000;transform:scaleX(0.8600);">C</span><span class="t" id="t66" style="left:225.09px;top:413.02px;font:400 12.5px/12.5px 'Liberation Sans', sans-serif;color:#000;transform:scaleX(0.9402);">05/01/2012</span><span class="t" id="t67" style="left:360.92px;top:413.02px;font:400 12.5px/12.5px 'Liberation Sans', sans-serif;color:#000;transform:scaleX(0.8600);">51</span><span class="t" id="t68" style="left:436.40px;top:413.02px;font:400 12.5px/12.5px 'Liberation Sans', sans-serif;color:#000;transform:scaleX(0.8600);">4</span><span class="t" id="t69" style="left:528.11px;top:413.02px;font:400 12.5px/12.5px 'Liberation Sans', sans-serif;color:#000;transform:scaleX(0.8967);">993,12</span><span class="t" id="t70" style="left:161.12px;top:430.02px;font:400 12.5px/12.5px 'Liberation Sans', sans-serif;color:#000;transform:scaleX(0.8724);">1240</span><span class="t" id="t71" style="left:190.42px;top:430.02px;font:400 12.5px/12.5px 'Liberation Sans', sans-serif;color:#000;transform:scaleX(0.8600);">C</span><span class="t" id="t72" style="left:225.09px;top:430.02px;font:400 12.5px/12.5px 'Liberation Sans', sans-serif;color:#000;transform:scaleX(0.9402);">05/01/2012</span><span class="t" id="t73" style="left:360.92px;top:430.02px;font:400 12.5px/12.5px 'Liberation Sans', sans-serif;color:#000;transform:scaleX(0.8600);">51</span><span class="t" id="t74" style="left:430.42px;top:430.02px;font:400 12.5px/12.5px 'Liberation Sans', sans-serif;color:#000;transform:scaleX(0.8600);">12</span><span class="t" id="t75" style="left:534.10px;top:430.02px;font:400 12.5px/12.5px 'Liberation Sans', sans-serif;color:#000;transform:scaleX(0.9044);">887,6</span><span class="t" id="t76" style="left:531.94px;top:509.02px;font:400 12.5px/12.5px 'Liberation Sans', sans-serif;color:#000;transform:scaleX(0.8302);"><u>P</u>rocessar</span></div>
<div class="a" style="left:444px;top:350px;width:120px;height:98px;border:3px solid #7B0C10"></div>
</body></html>
